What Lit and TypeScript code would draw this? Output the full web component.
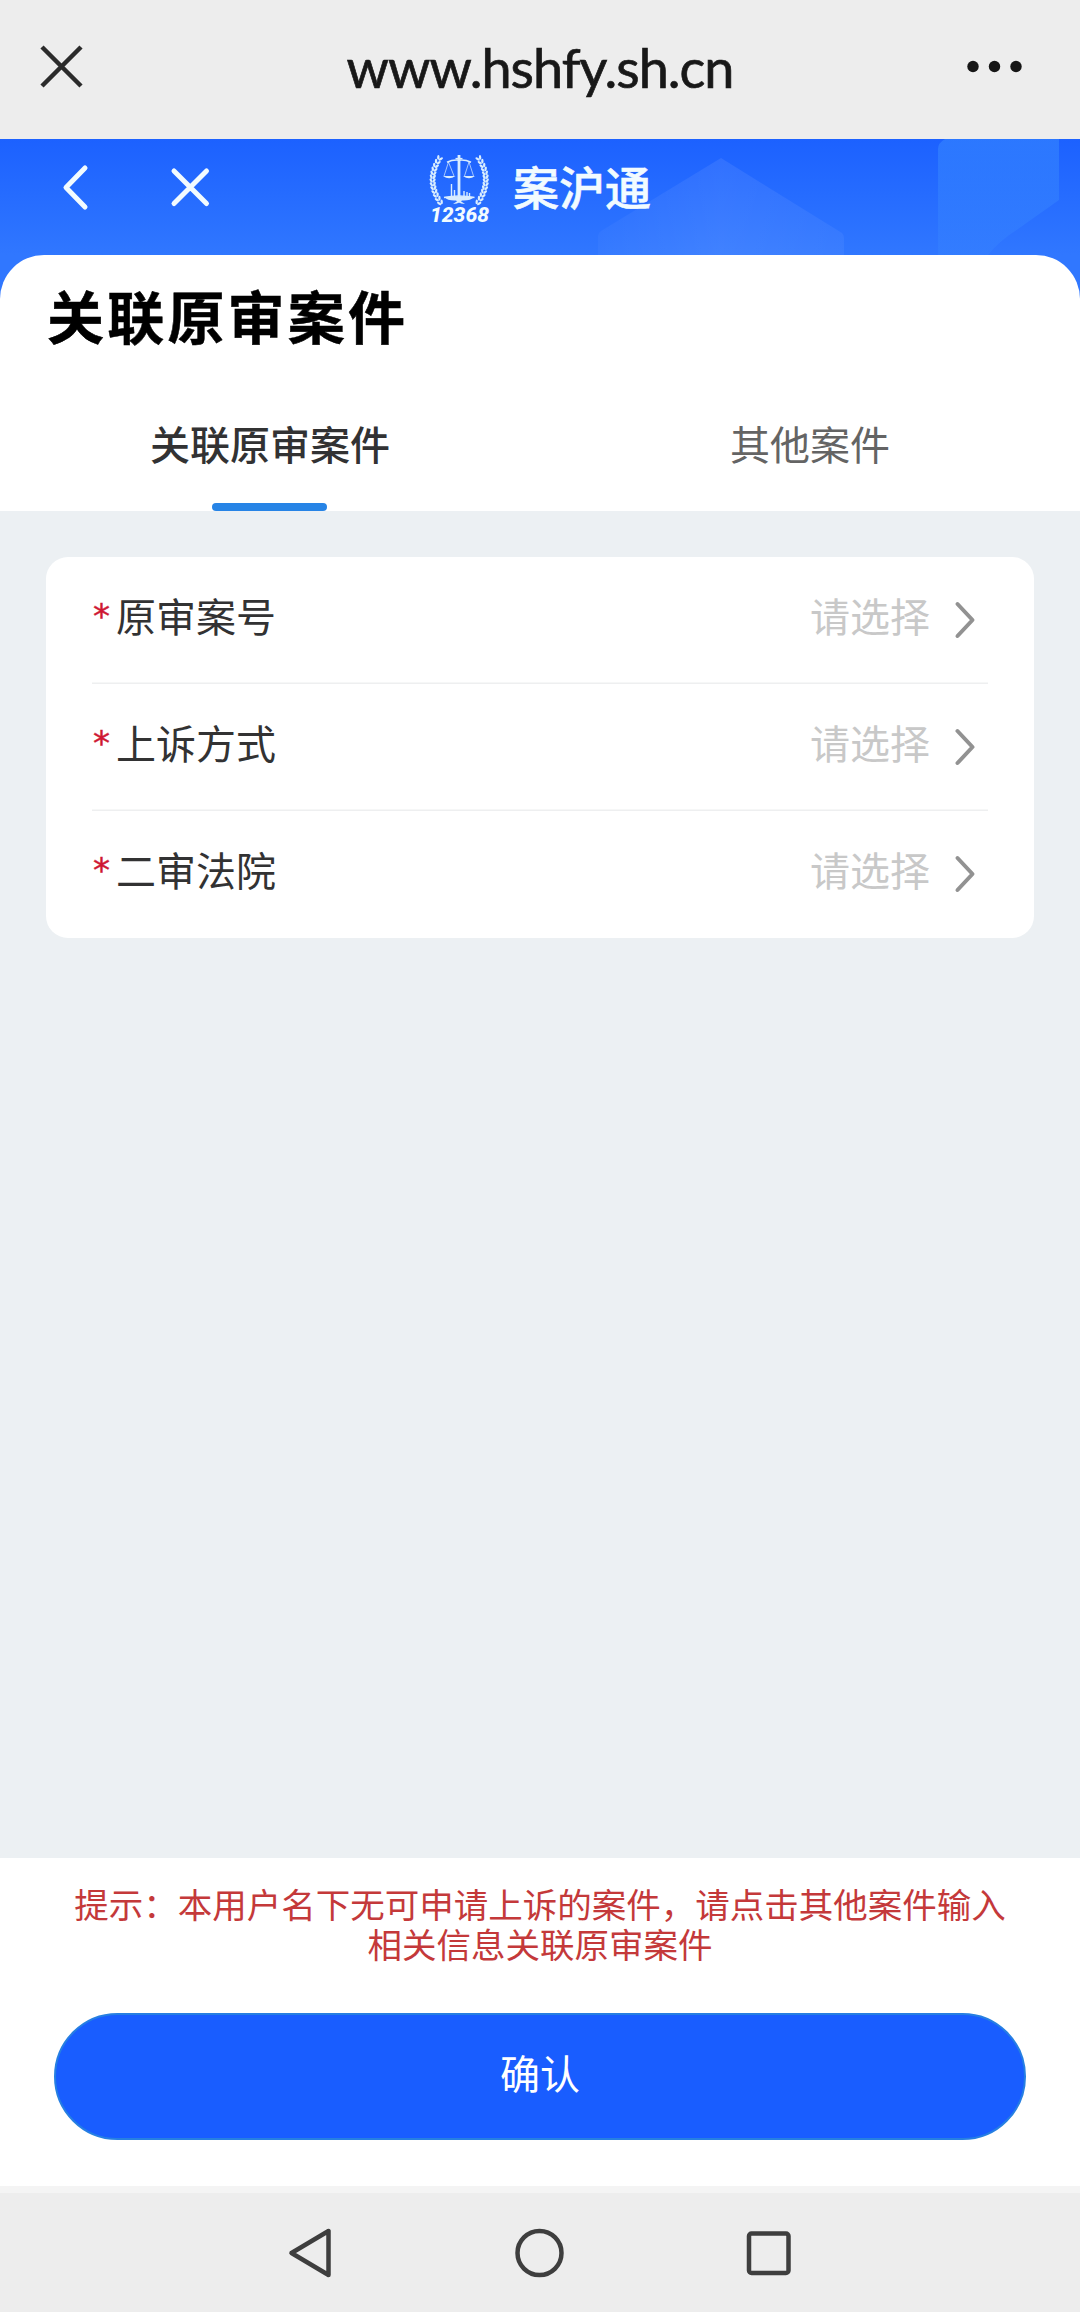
import { LitElement, html, css, svg } from "lit";
import { customElement, property, state } from "lit/decorators.js";

/** Leaf pairs along the left branch of the emblem wreath: x, y, rotation. */
const LEAVES = Array.from({ length: 13 }, (_, i) => {
  const t = i / 12;
  const bend = 2 * t - 1;
  return {
    x: 4.6 + 7.4 * bend * bend,
    y: 3.5 + 44.5 * t,
    r: (-Math.atan((29.6 * bend) / 44.5) * 180) / Math.PI,
  };
});

const branch = () => svg`
  ${LEAVES.map(({ x, y, r }) => svg`
    <g transform="translate(${x} ${y}) rotate(${r})">
      <ellipse cx="-1.7" cy="0" rx="1.2" ry="2.4" transform="rotate(-28)"/>
      <ellipse cx="1.7" cy="0" rx="1.2" ry="2.4" transform="rotate(28)"/>
    </g>`)}`;

@customElement("court-emblem")
class CourtEmblem extends LitElement {
  static styles = css`
    :host { display: block; color: #d9edff; }
    .emblem { display: block; width: 64px; height: 70px; overflow: visible; }
    .digits {
      font-family: Roboto, "Liberation Sans", sans-serif; fill: #f2fbff;
      font-size: 19.5px; font-weight: 800; font-style: italic;
    }
  `;
  render() {
    return html`
      <svg class="emblem" viewBox="0 0 64 70" fill="currentColor">
        <g>${branch()}</g>
        <g transform="translate(62.4 0) scale(-1 1)">${branch()}</g>
        <g fill="none" stroke="currentColor">
          <path stroke-width="2.8" d="M31 1V43"/>
          <path stroke-width="1.7" d="M19 8.2Q25 5.4 31 6.2Q37 5.4 43 8.2"/>
          <path stroke-width="1.2" d="M27.5 4.5H34.5"/>
          <path stroke-width=".7" d="M20.5 8L16 22M20.5 8L26 22M41 8L36.5 22M41 8L45.5 22"/>
          <path stroke-width="1.4" d="M23.5 43V30M26.5 44V36M36 43V37M39 43V38M41.5 43V39"/>
          <path stroke-width="1.4" d="M16 43.5Q31 40.5 46.5 43.5"/>
        </g>
        <path d="M15 22H27.5Q21 26.5 15 22ZM35 22H47Q41 26.5 35 22Z"/>
        <path d="M16 43Q31 41.5 46.5 43Q42 47 34 46.5L31 49L28 46.5Q20 47 16 43Z"/>
        <path d="M25 50L31 46L37 50L33 49.5L31 48.3L29 49.5Z"/>
        <text class="digits" x="2" y="68" textLength="59" lengthAdjust="spacingAndGlyphs">12368</text>
      </svg>`;
  }
}

@customElement("form-row")
class FormRow extends LitElement {
  @property() label = "";
  @property() placeholder = "";
  static styles = css`
    :host { display: block; height: 127px; box-sizing: border-box; }
    .row {
      display: flex; align-items: center; height: 100%; box-sizing: border-box;
      padding: 0 11px 2px 1px; font-size: 40px; line-height: 58px;
    }
    .mark {
      width: 23px; color: #cf1733; font-family: "DejaVu Sans", sans-serif; font-size: 34px;
      padding-bottom: 7px; -webkit-text-stroke: .4px #cf1733;
    }
    .label { flex: 1; color: #323233; padding-bottom: 9px; }
    .value { color: #c8c8c8; padding-bottom: 9px; margin-right: 23px; }
    .arrow { display: block; width: 24px; height: 40px; }
  `;
  render() {
    return html`
      <div class="row">
        <span class="mark">*</span>
        <span class="label">${this.label}</span>
        <span class="value">${this.placeholder}</span>
        <svg class="arrow" viewBox="0 0 24 40" fill="none" stroke="#929292" stroke-width="4" stroke-linecap="round" stroke-linejoin="round">
          <path d="M4.5 4L19.5 20L4.5 36"/>
        </svg>
      </div>`;
  }
}

@customElement("app-root")
class AppRoot extends LitElement {
  @state() private active = 0;
  private tabs = ["关联原审案件", "其他案件"];
  private fields = ["原审案号", "上诉方式", "二审法院"];

  static styles = css`
    :host {
      display: flex; flex-direction: column; width: 1080px; height: 2312px;
      overflow: hidden; background: #ecf0f3;
      font-family: "Noto Sans CJK SC", sans-serif;
    }
    svg { display: block; }
    .browser {
      display: grid; grid-template-columns: 124px 1fr 124px; align-items: center;
      height: 139px; background: #ededed; flex: none;
    }
    .close { margin: 0 0 7px 36px; }
    .url {
      text-align: center; font-family: Lato, sans-serif; font-size: 54px; line-height: 66px;
      letter-spacing: -1px; padding-bottom: 4px;
      color: #181818; -webkit-text-stroke: .7px #181818; white-space: nowrap;
    }
    .more { margin: 0 0 6px 4px; }
    .hero {
      display: grid; grid-template-columns: 1fr; height: 161px; flex: none;
      background: linear-gradient(#1c61ff 0, #3077ff 116px, #3077ff);
    }
    .hero > * { grid-area: 1 / 1; }
    .bar { display: flex; align-items: center; height: 96px; }
    .back { margin-left: 56px; }
    .exit { margin-left: 76px; }
    .emblem { margin: 4px 0 0 204px; }
    .brand {
      margin-left: 21px; color: #f2fbff; font-size: 46px; line-height: 60px; font-weight: 500;
      padding-bottom: 5px; -webkit-text-stroke: .6px #f2fbff;
    }
    .sheet {
      margin-top: -45px; height: 256px; flex: none; background: #fff;
      border-radius: 44px 44px 0 0; display: flex; flex-direction: column;
    }
    .heading {
      margin: 17px 0 0 47px; font-size: 57px; line-height: 84px; font-weight: 700;
      letter-spacing: 3.2px; color: #000; -webkit-text-stroke: .5px #000;
    }
    .tabs { display: grid; grid-template-columns: 1fr 1fr; margin-top: auto; }
    .tab {
      display: flex; flex-direction: column; align-items: center;
      font-size: 40px; line-height: 58px; color: #646464;
    }
    .tab.on { color: #323233; font-weight: 500; }
    .ink { width: 115px; height: 8px; border-radius: 4px; margin: 31px 1px 0 0; }
    .on .ink { background: #2784e6; }
    .body { flex: 1; padding: 46px 46px 0; }
    .card { background: #fff; border-radius: 22px; padding: 0 46px; }
    .item + .item { box-shadow: 0 -1.5px 0 #eeeff0; }
    .footer { height: 328px; background: #fff; flex: none; box-sizing: border-box; padding: 25px 54px 0; }
    .hint {
      text-align: center; color: #c4393a; font-size: 34.5px; line-height: 40.3px; white-space: nowrap;
    }
    .hint-line { display: block; }
    .confirm {
      display: flex; align-items: center; justify-content: center; box-sizing: border-box;
      width: 972px; height: 127px; margin-top: 49px; padding: 0 0 9px; border: 2.5px solid #267fe2;
      border-radius: 64px; background: #195dff; color: #fff; font: inherit; font-size: 40px;
    }
    .edge { height: 7px; background: #f4f4f4; flex: none; }
    .nav {
      display: flex; justify-content: center; align-items: center; gap: 178px;
      height: 119px; background: #ededed; flex: none; box-sizing: border-box;
    }
  `;

  render() {
    return html`
      <div class="browser">
        <svg class="close" width="50" height="50" viewBox="0 0 50 50" stroke="#2b2b2b" stroke-width="4.5">
          <path d="M6 6L45 45M45 6L6 45"/>
        </svg>
        <div class="url">www.hshfy.sh.cn</div>
        <svg class="more" width="90" height="20" viewBox="0 0 90 20" fill="#161616">
          <circle cx="13" cy="9.5" r="5.7"/><circle cx="34.5" cy="9.5" r="5.7"/><circle cx="56" cy="9.5" r="5.7"/>
        </svg>
      </div>
      <div class="hero">
        <svg width="1080" height="161" viewBox="0 0 1080 161">
          <defs>
            <linearGradient id="roof" x1="0" y1="0" x2="1" y2="0">
              <stop offset="0" stop-color="#fff" stop-opacity=".03"/>
              <stop offset=".5" stop-color="#fff" stop-opacity=".08"/>
              <stop offset="1" stop-color="#fff" stop-opacity=".05"/>
            </linearGradient>
            <linearGradient id="block" x1="0" y1="0" x2="0" y2="1">
              <stop offset="0" stop-color="#48a0ff" stop-opacity=".36"/>
              <stop offset="1" stop-color="#48a0ff" stop-opacity=".12"/>
            </linearGradient>
          </defs>
          <path d="M721 19L842 94Q844 96 844 99V161H598V97Q598 94 601 92Z" fill="url(#roof)"/>
          <path d="M945 0H1059V61L1018 90Q996 104 985 120H938V10Q938 4 945 0Z" fill="url(#block)"/>
        </svg>
        <div class="bar">
          <svg class="back" width="38" height="50" viewBox="0 0 38 50" fill="none" stroke="#f2fbff" stroke-width="5" stroke-linecap="round" stroke-linejoin="round">
            <path d="M29 6L10 25.5L29 45"/>
          </svg>
          <svg class="exit" width="54" height="50" viewBox="0 0 54 50" stroke="#f2fbff" stroke-width="5" stroke-linecap="round">
            <path d="M4 9L36.5 41.5M36.5 9L4 41.5"/>
          </svg>
          <court-emblem class="emblem"></court-emblem>
          <div class="brand">案沪通</div>
        </div>
      </div>
      <div class="sheet">
        <div class="heading">关联原审案件</div>
        <div class="tabs">
          ${this.tabs.map((t, i) => html`
            <div class="tab ${i === this.active ? "on" : ""}" @click=${() => (this.active = i)}>
              <span>${t}</span><span class="ink"></span>
            </div>`)}
        </div>
      </div>
      <div class="body">
        <div class="card">
          ${this.fields.map((f) => html`<form-row class="item" label=${f} placeholder="请选择"></form-row>`)}
        </div>
      </div>
      <div class="footer">
        <div class="hint">
          <span class="hint-line">提示：本用户名下无可申请上诉的案件，请点击其他案件输入</span>
          <span class="hint-line">相关信息关联原审案件</span>
        </div>
        <button class="confirm">确认</button>
      </div>
      <div class="edge"></div>
      <div class="nav">
        <svg width="52" height="56" viewBox="0 0 52 56" fill="none" stroke="#3e3e3e" stroke-width="4.5" stroke-linejoin="round">
          <path d="M7.5 28L44.5 6V50Z"/>
        </svg>
        <svg width="52" height="56" viewBox="0 0 52 56" fill="none" stroke="#3e3e3e" stroke-width="4.5">
          <circle cx="25.5" cy="28" r="22"/>
        </svg>
        <svg width="52" height="56" viewBox="0 0 52 56" fill="none" stroke="#3e3e3e" stroke-width="4.5">
          <rect x="5" y="8.5" width="39.5" height="39.5" rx="2.5"/>
        </svg>
      </div>`;
  }
}
